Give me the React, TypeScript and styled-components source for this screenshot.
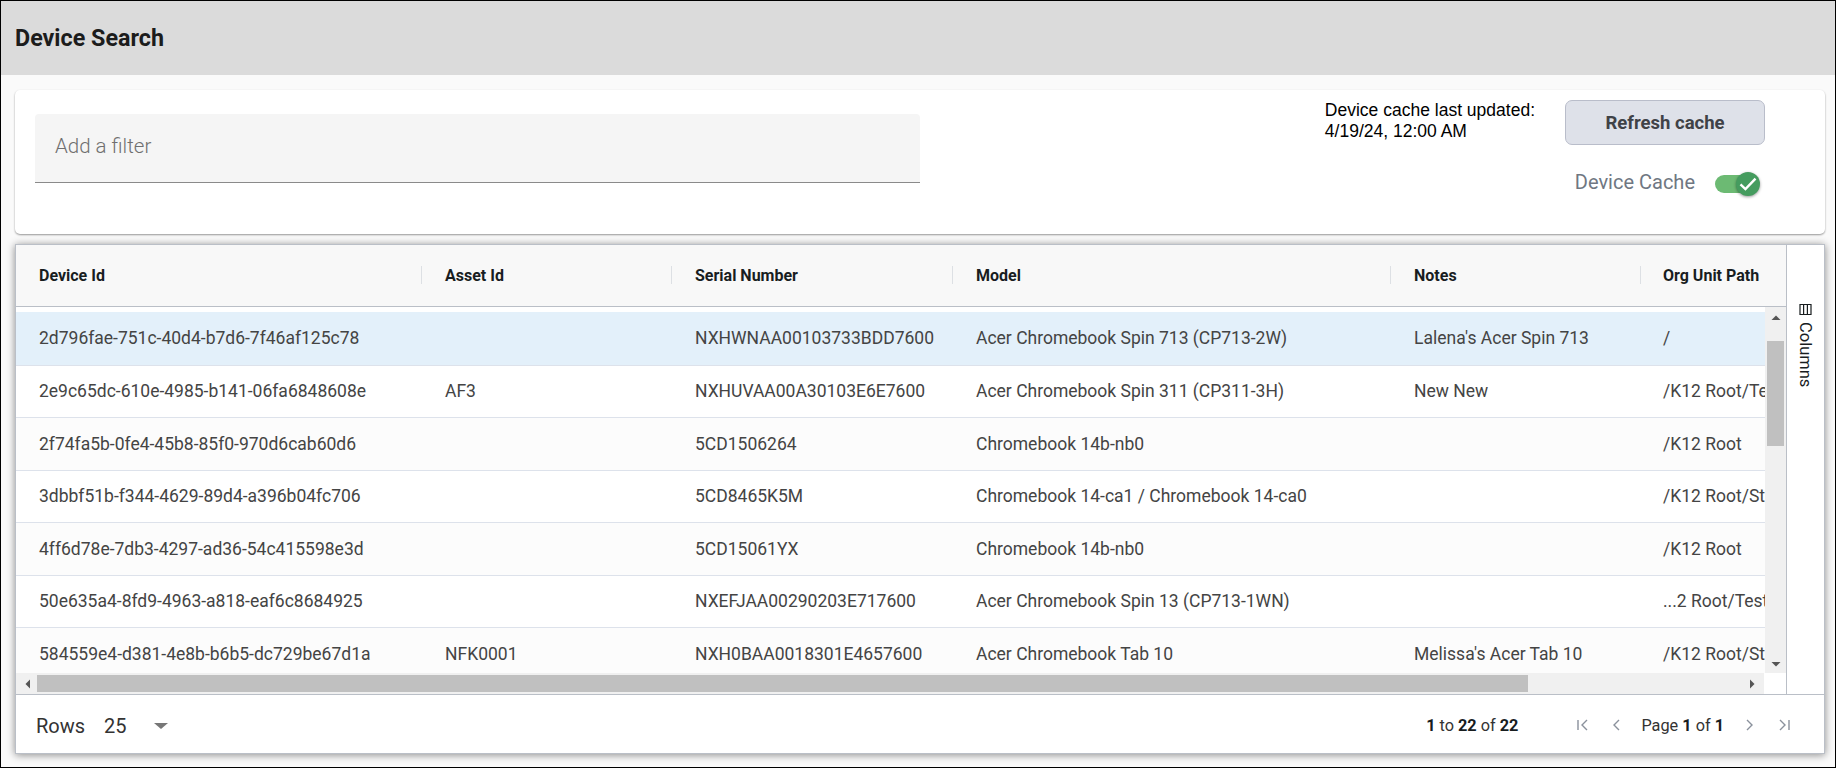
import styled, { createGlobalStyle } from "styled-components"

const GlobalStyle = createGlobalStyle`
  html, body {
    margin: 0;
    padding: 0;
    background: #fafafa;
  }
  * {
    box-sizing: border-box;
  }
`

const COLUMNS = "406px 250px 281px 438px 250px 250px"

const Page = styled.div`
  width: 1836px;
  height: 768px;
  border: 1px solid #000;
  background: #fafafa;
  font-family: Roboto, sans-serif;
  overflow: hidden;
  display: flex;
  flex-direction: column;
`

const TitleBar = styled.header`
  height: 74px;
  flex: none;
  background: #dbdbdb;
  display: flex;
  align-items: center;
  padding-left: 14px;
`

const Title = styled.h1`
  margin: 0;
  font-size: 23.3px;
  font-weight: 700;
  color: #1c1c1c;
`

const Content = styled.main`
  flex: 1;
  padding: 15px 10px 0 14px;
  display: flex;
  flex-direction: column;
  gap: 10px;
`

const FilterCard = styled.section`
  height: 144px;
  flex: none;
  background: #fff;
  border-radius: 5px;
  box-shadow: 0 1px 2px rgba(0, 0, 0, 0.4);
  padding: 24px 60px 0 20px;
  display: flex;
  justify-content: space-between;
`

const FilterField = styled.div`
  width: 885px;
  height: 69px;
  background: #f5f5f5;
  border-bottom: 1px solid #8a8a8a;
  border-radius: 4px 4px 0 0;
  padding: 0 20px 4px;
  display: flex;
  align-items: center;
  font-size: 20.5px;
  font-weight: 300;
  color: #6f6f6f;
`

const CachePanel = styled.div`
  display: flex;
  margin-top: -14px;
  gap: 30px;
`

const CacheStamp = styled.div`
  font-family: "Liberation Sans", Arial, sans-serif;
  font-size: 17.5px;
  line-height: 21px;
  color: #000;
`

const CacheActions = styled.div`
  display: flex;
  flex-direction: column;
  align-items: flex-end;
  width: 200px;
`

const RefreshButton = styled.button`
  width: 200px;
  height: 45px;
  flex: none;
  background: #dee1e9;
  border: 1px solid #b9bdca;
  border-radius: 7px;
  font-family: Roboto, sans-serif;
  font-size: 18.5px;
  font-weight: 700;
  color: #3f4247;
`

const ToggleRow = styled.div`
  display: flex;
  align-items: center;
  margin-top: 25px;
  margin-right: 14px;
  gap: 20px;
  font-size: 20px;
  font-weight: 400;
  color: #6f7782;
  white-space: nowrap;
`

const Toggle = styled.span`
  position: relative;
  display: block;
  width: 36px;
  height: 18px;
  margin-top: 4px;
  border-radius: 9px;
  background: #6cba73;
`

const ToggleThumb = styled.span`
  position: absolute;
  right: -9px;
  top: -3px;
  width: 24px;
  height: 24px;
  border-radius: 50%;
  background: #459c5f;
  box-shadow: 0 1px 3px rgba(0, 0, 0, 0.4);
  display: flex;
  align-items: center;
  justify-content: center;
`

const GridShell = styled.section`
  height: 510px;
  flex: none;
  width: 1810px;
  background: #fff;
  border: 1px solid #babfc7;
  box-shadow: 0 1px 8px rgba(0, 0, 0, 0.45);
  display: flex;
  flex-direction: column;
`

const GridMain = styled.div`
  flex: 1;
  min-height: 0;
  display: flex;
`

const GridTable = styled.div`
  flex: 1;
  min-width: 0;
  display: flex;
  flex-direction: column;
`

const HeaderRow = styled.div`
  height: 62px;
  flex: none;
  display: grid;
  grid-template-columns: ${COLUMNS};
  background: #f8f8f8;
  border-bottom: 1px solid #babfc7;
  overflow: hidden;
`

const HeaderCell = styled.div<{ $divider?: boolean }>`
  position: relative;
  padding-left: 23px;
  display: flex;
  align-items: center;
  font-size: 16px;
  font-weight: 700;
  color: #181d1f;
  white-space: nowrap;

  &:last-child {
    padding-left: 22px;
  }

  &::after {
    content: "";
    display: ${(p) => (p.$divider ? "block" : "none")};
    position: absolute;
    right: 0;
    top: 21px;
    height: 18px;
    width: 1px;
    background: #dde0e4;
  }
`

const BodyArea = styled.div`
  flex: 1;
  min-height: 0;
  display: flex;
`

const Viewport = styled.div`
  flex: 1;
  min-width: 0;
  overflow: hidden;
  padding-top: 4px;
  border-top: 1px solid #fff;
  box-shadow: inset 0 4px 0 #fff;
`

const Row = styled.div<{ $selected?: boolean; $alt?: boolean }>`
  height: 52.5px;
  display: grid;
  grid-template-columns: ${COLUMNS};
  border-top: ${(p) => (p.$selected ? "0" : "1px solid #dde2eb")};
  background: ${(p) => (p.$selected ? "#e3f0fa" : p.$alt ? "#fcfcfc" : "#fff")};
`

const Cell = styled.div`
  padding-left: 23px;
  display: flex;
  align-items: center;
  font-size: 17.5px;
  font-weight: 400;
  color: #444;
  white-space: nowrap;

  &:last-child {
    padding-left: 22px;
  }
`

const VScroll = styled.div`
  width: 21px;
  flex: none;
  background: #f0f0f0;
  display: flex;
  flex-direction: column;
  align-items: center;
  justify-content: space-between;
  padding: 6px 0 4px;
  position: relative;
`

const VThumb = styled.div`
  position: absolute;
  top: 34px;
  left: 2px;
  width: 17px;
  height: 105px;
  background: #c0c0c0;
`

const HScrollBar = styled.div`
  height: 21px;
  flex: none;
  display: flex;
`

const HTrack = styled.div`
  flex: 1;
  background: #f0f0f0;
  display: flex;
  align-items: center;
  justify-content: space-between;
  padding: 0 7px;
  position: relative;
`

const HThumb = styled.div`
  position: absolute;
  left: 21px;
  top: 2px;
  width: 1491px;
  height: 17px;
  background: #c0c0c0;
`

const Corner = styled.div`
  width: 22px;
  flex: none;
`

const SideBar = styled.aside`
  width: 38px;
  flex: none;
  border-left: 1px solid #babfc7;
  padding-top: 58px;
  display: flex;
  justify-content: center;
`

const SideTab = styled.div`
  writing-mode: vertical-lr;
  display: flex;
  align-items: center;
  gap: 6px;
  font-size: 16.5px;
  color: #181d1f;
  height: fit-content;
`

const Footer = styled.footer`
  height: 59px;
  flex: none;
  border-top: 1px solid #babfc7;
  display: flex;
  align-items: center;
  justify-content: space-between;
  padding: 2px 31px 0 20px;
  color: #333;
`

const RowsPicker = styled.div`
  display: flex;
  align-items: center;
  padding-top: 2px;
  font-size: 20px;
`

const RowsValue = styled.span`
  margin-left: 19px;
  margin-right: 27px;
`

const CaretDown = styled.span`
  width: 0;
  height: 0;
  border-left: 7px solid transparent;
  border-right: 7px solid transparent;
  border-top: 6px solid #777;
`

const Paging = styled.div`
  display: flex;
  align-items: center;
  font-size: 16.3px;
  color: #333;

  b {
    font-weight: 700;
    color: #181d1f;
  }
`

const RangeText = styled.span`
  margin-right: 56px;
`

const PageText = styled.span`
  margin: 0 17px 0 16px;
`

const PageButton = styled.span<{ $gap?: number }>`
  width: 18px;
  height: 18px;
  display: flex;
  margin-left: ${(p) => p.$gap ?? 0}px;
`

const rows = [
  ["2d796fae-751c-40d4-b7d6-7f46af125c78", "", "NXHWNAA00103733BDD7600", "Acer Chromebook Spin 713 (CP713-2W)", "Lalena's Acer Spin 713", "/"],
  ["2e9c65dc-610e-4985-b141-06fa6848608e", "AF3", "NXHUVAA00A30103E6E7600", "Acer Chromebook Spin 311 (CP311-3H)", "New New", "/K12 Root/Test Devices"],
  ["2f74fa5b-0fe4-45b8-85f0-970d6cab60d6", "", "5CD1506264", "Chromebook 14b-nb0", "", "/K12 Root"],
  ["3dbbf51b-f344-4629-89d4-a396b04fc706", "", "5CD8465K5M", "Chromebook 14-ca1 / Chromebook 14-ca0", "", "/K12 Root/Staff Devices"],
  ["4ff6d78e-7db3-4297-ad36-54c415598e3d", "", "5CD15061YX", "Chromebook 14b-nb0", "", "/K12 Root"],
  ["50e635a4-8fd9-4963-a818-eaf6c8684925", "", "NXEFJAA00290203E717600", "Acer Chromebook Spin 13 (CP713-1WN)", "", "...2 Root/Test Devices"],
  ["584559e4-d381-4e8b-b6b5-dc729be67d1a", "NFK0001", "NXH0BAA0018301E4657600", "Acer Chromebook Tab 10", "Melissa's Acer Tab 10", "/K12 Root/Staff Devices"],
]

const headers = ["Device Id", "Asset Id", "Serial Number", "Model", "Notes", "Org Unit Path"]

function Arrow({ d }: { d: string }) {
  return (
    <svg width="10" height="10" viewBox="0 0 10 10">
      <path d={d} fill="#555" />
    </svg>
  )
}

function PageIcon({ d }: { d: string }) {
  return (
    <svg width="18" height="18" viewBox="0 0 18 18" fill="none" stroke="#8a919c" strokeWidth="1.4">
      <path d={d} />
    </svg>
  )
}

export default function App() {
  return (
    <>
      <GlobalStyle />
      <Page>
        <TitleBar>
          <Title>Device Search</Title>
        </TitleBar>
        <Content>
          <FilterCard>
            <FilterField>Add a filter</FilterField>
            <CachePanel>
              <CacheStamp>
                Device cache last updated:
                <br />
                4/19/24, 12:00 AM
              </CacheStamp>
              <CacheActions>
                <RefreshButton>Refresh cache</RefreshButton>
                <ToggleRow>
                  Device Cache
                  <Toggle>
                    <ToggleThumb>
                      <svg width="26" height="26" viewBox="0 0 16 16" fill="none" stroke="#fff" strokeWidth="1.6">
                        <path d="M3 8.2l3.3 3.2 6.7-7" />
                      </svg>
                    </ToggleThumb>
                  </Toggle>
                </ToggleRow>
              </CacheActions>
            </CachePanel>
          </FilterCard>
          <GridShell>
            <GridMain>
              <GridTable>
                <HeaderRow>
                  {headers.map((h, i) => (
                    <HeaderCell key={h} $divider={i < 5}>
                      {h}
                    </HeaderCell>
                  ))}
                </HeaderRow>
                <BodyArea>
                  <Viewport>
                    {rows.map((r, i) => (
                      <Row key={r[0]} $selected={i === 0} $alt={i % 2 === 0}>
                        {r.map((c, j) => (
                          <Cell key={j}>{c}</Cell>
                        ))}
                      </Row>
                    ))}
                  </Viewport>
                  <VScroll>
                    <Arrow d="M5 2.5l4.5 4.5h-9z" />
                    <VThumb />
                    <Arrow d="M5 7.5L.5 3h9z" />
                  </VScroll>
                </BodyArea>
                <HScrollBar>
                  <HTrack>
                    <Arrow d="M2.5 5L7 .5v9z" />
                    <HThumb />
                    <Arrow d="M7.5 5L3 .5v9z" />
                  </HTrack>
                  <Corner />
                </HScrollBar>
              </GridTable>
              <SideBar>
                <SideTab>
                  <svg width="13" height="13" viewBox="0 0 13 13" fill="none" stroke="#181d1f" strokeWidth="1.2">
                    <path d="M1 1.5h11v10H1zM4.6 1.5v10M8.4 1.5v10" />
                  </svg>
                  Columns
                </SideTab>
              </SideBar>
            </GridMain>
            <Footer>
              <RowsPicker>
                Rows
                <RowsValue>25</RowsValue>
                <CaretDown />
              </RowsPicker>
              <Paging>
                <RangeText>
                  <b>1</b> to <b>22</b> of <b>22</b>
                </RangeText>
                <PageButton>
                  <PageIcon d="M4 4v10M13 4L8 9l5 5" />
                </PageButton>
                <PageButton $gap={15}>
                  <PageIcon d="M12 4L7 9l5 5" />
                </PageButton>
                <PageText>
                  Page <b>1</b> of <b>1</b>
                </PageText>
                <PageButton>
                  <PageIcon d="M6 4l5 5-5 5" />
                </PageButton>
                <PageButton $gap={16}>
                  <PageIcon d="M5 4l5 5-5 5M14 4v10" />
                </PageButton>
              </Paging>
            </Footer>
          </GridShell>
        </Content>
      </Page>
    </>
  )
}
